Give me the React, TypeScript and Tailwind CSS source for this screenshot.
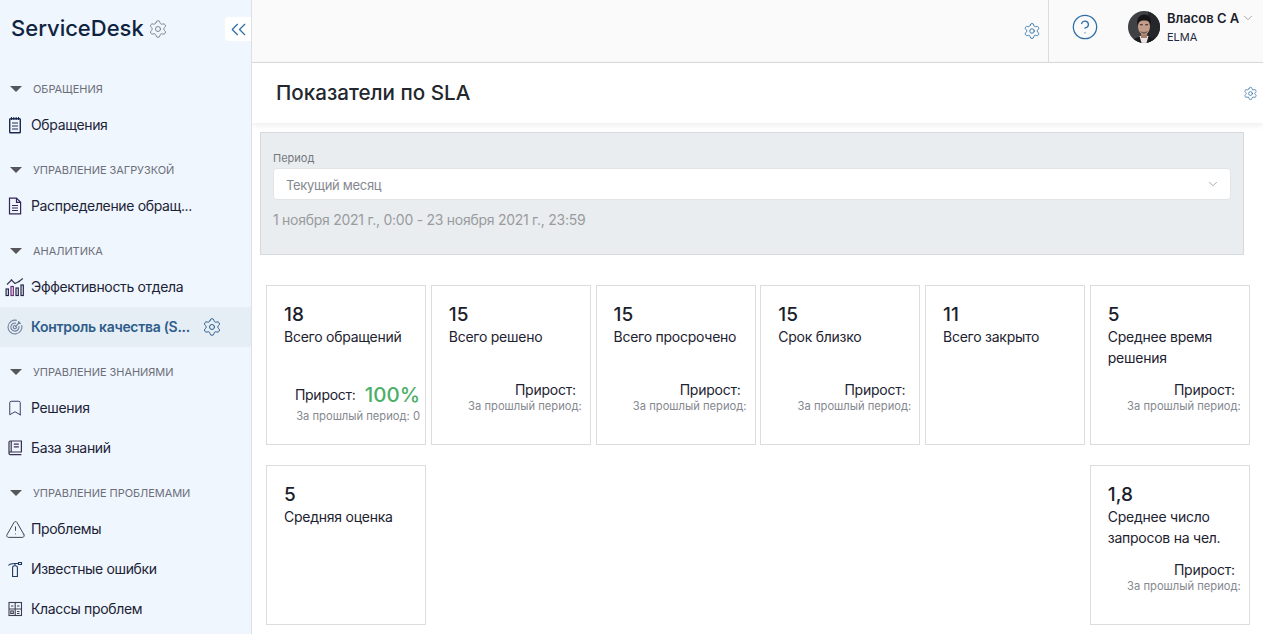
import { Bookmark, ChevronDown, ChevronsLeft, CircleHelp, Settings, TriangleAlert } from "lucide-react";
import type { ReactNode } from "react";

function ClipboardIcon() {
  return (
    <svg width="14" height="18" viewBox="0 0 14 18" fill="none" stroke="#1c2a50" strokeWidth="1.4">
      <rect x="1.700" y="2.700" width="10.600" height="14" rx="0.800" />
      <path d="M3.500 1V4M5.800 1V4M8.200 1V4M10.500 1V4" strokeWidth="1" />
      <path d="M4 7H10M4 10H10M4 13H10" strokeWidth="1.200" />
    </svg>
  );
}

function FileIcon() {
  return (
    <svg width="14" height="18" viewBox="0 0 14 18" fill="none" stroke="#33245c" strokeWidth="1.200">
      <path d="M1.500 1.200H8.500L12.600 5.300V16.800H1.500Z" />
      <path d="M8.500 1.200V5.300H12.600" />
      <path d="M4 8.500H10M4 11H10M4 13.500H10" />
    </svg>
  );
}

function ChartIcon() {
  return (
    <svg width="20" height="20" viewBox="0 0 20 20" fill="none" stroke="#26264a" strokeWidth="1.200">
      <path d="M2 7.500L6.500 3L10 6.500L14 4.500L17.800 1.500" stroke="#3c3558" />
      <circle cx="6.500" cy="3" r="0.800" fill="#26264a" stroke="none" />
      <circle cx="14" cy="4.500" r="0.800" fill="#26264a" stroke="none" />
      <rect x="1.100" y="12" width="2.300" height="6.500" />
      <rect x="6" y="9.500" width="2.300" height="9" stroke="#6b2a7a" />
      <rect x="11" y="11" width="2.300" height="7.500" />
      <rect x="16" y="8" width="2.300" height="10.500" />
    </svg>
  );
}

function TargetIcon() {
  return (
    <svg width="16" height="16" viewBox="0 0 16 16" fill="none" stroke="#6d7f9c" strokeWidth="1.100">
      <path d="M14.600 6.200A6.900 6.900 0 1 1 9.800 1.400" />
      <path d="M11.900 7A4.100 4.100 0 1 1 9 4.100" />
      <path d="M9.600 7.600A1.700 1.700 0 1 1 8.400 6.400" />
      <path d="M8 8L13 3M11.500 2.200V4.500H13.800" />
    </svg>
  );
}

function BookIcon() {
  return (
    <svg width="16" height="16" viewBox="0 0 16 16" fill="none" stroke="#3a3050" strokeWidth="1.200">
      <path d="M2 13V2.200C2 1.500 2.500 1 3.200 1H14.400V12H3.200C2.500 12 2 12.500 2 13.200C2 14 2.500 14.600 3.200 14.600H14.400" />
      <path d="M4.200 1V12" />
      <path d="M6.800 4.200H11.800M6.800 6.800H11.800" />
    </svg>
  );
}

function PinIcon() {
  return (
    <svg width="16" height="16" viewBox="0 0 16 16" fill="none" stroke="#1f3a60" strokeWidth="1.100">
      <path d="M5.600 15.500V6.400C5.600 5.500 6.500 4.800 8 4.800C9.500 4.800 10.400 5.500 10.400 6.400V15.500Z" />
      <path d="M8 4.800V2.500" />
      <path d="M1.500 4.500C2.500 3 4 2.500 8 2.500H11.500" />
      <path d="M11.500 1.500H14.500V3.500H11.500Z" />
    </svg>
  );
}

function TableIcon() {
  return (
    <svg width="16" height="16" viewBox="0 0 16 16" fill="none" stroke="#3f3f50" strokeWidth="1.100">
      <rect x="2" y="1.500" width="12.500" height="13" />
      <path d="M2 8H14.500M8.200 1.500V14.500M4 5H6.500M10 5H12.500M10 10.500H12.500M10 12.500H12.500" />
      <rect x="3.800" y="10" width="2.500" height="2.500" />
    </svg>
  );
}

function Avatar() {
  return (
    <svg width="32" height="32" viewBox="0 0 32 32" className="rounded-full shrink-0">
      <rect width="32" height="32" fill="#3f4145" />
      <rect x="20" width="12" height="32" fill="#26272a" />
      <path d="M3 32C5 27 10 25.500 16 25.500C22 25.500 27 27 29 32Z" fill="#1a1b1e" />
      <path d="M11.500 25H20.500L18.500 32H13.500Z" fill="#ece4e4" />
      <rect x="13" y="21" width="6" height="6" fill="#a87f6e" />
      <ellipse cx="16" cy="15.500" rx="6" ry="8" fill="#c39c8a" />
      <path d="M9.500 15C8 7 12 3.500 16.500 3.500C21 3.500 24 7 22.500 15C22 11 21 9.500 16 9.500C12 9.500 10.500 11 9.500 15Z" fill="#151518" />
      <path d="M12 13.800H14.700M17.300 13.800H20" stroke="#2c211d" strokeWidth="1.100" />
      <path d="M12 20C13.500 23.500 18.500 23.500 20 20C18 21.200 14 21.200 12 20Z" fill="#7a5c4e" />
    </svg>
  );
}

function Section({ title, children }: { title: string; children: ReactNode }) {
  return (
    <div className="mb-[9px]">
      <div className="flex items-center h-8 pl-[10px]">
        <span className="w-0 h-0 border-x-[6px] border-x-transparent border-t-[6px] border-t-[#55555a]" />
        <span className="ml-[11px] text-[11px] text-[#6c6f78] tracking-[-0.05px] uppercase">{title}</span>
      </div>
      {children}
    </div>
  );
}

function NavItem({ icon, label, active }: { icon: ReactNode; label: string; active?: boolean }) {
  return (
    <div className={`flex items-center h-10 ${active ? "bg-[#e5eef5]" : ""}`}>
      <span className="w-[31px] flex justify-center pr-px shrink-0">{icon}</span>
      {active ? (
        <>
          <span className="text-sm font-semibold text-[#2f5d8a] whitespace-nowrap tracking-[-0.3px]">{label}</span>
          <Settings size={20} strokeWidth={1.200} className="ml-[12px] text-[#2f5d8a]" />
        </>
      ) : (
        <span className="text-sm text-[#1c2336] whitespace-nowrap tracking-[-0.35px]">{label}</span>
      )}
    </div>
  );
}

function Growth({ value, prev }: { value?: string; prev?: string }) {
  if (value) {
    return (
      <div className="flex flex-col items-end pr-[5px] -mt-[1px]">
        <div className="flex items-center h-[30px]">
          <span className="text-sm text-[#1d2230] mr-[9px] tracking-[-0.25px]">Прирост:</span>
          <span className="text-[20.500px] font-medium text-[#4caf68]">{value}</span>
        </div>
        <span className="text-[11.200px] leading-[14px] -mt-[1px] text-[#85888f] whitespace-nowrap">За прошлый период: {prev}</span>
      </div>
    );
  }
  return (
    <div className="flex flex-col items-end pr-[8px] mt-[2px]">
      <span className="text-sm leading-[18px] text-[#1d2230] pr-[6px] tracking-[-0.25px]">Прирост:</span>
      <span className="text-[11.200px] leading-[14px] text-[#85888f] whitespace-nowrap">За прошлый период:</span>
    </div>
  );
}

function Card({ num, label, growth, className }: { num: string; label: ReactNode; growth?: ReactNode; className?: string }) {
  return (
    <div className={`h-40 border border-[#dcdcdc] bg-white pt-[16px] ${className ?? ""}`}>
      <div className="pl-[17px] text-[19px] leading-[26px] font-medium text-[#1b1f2b]">{num}</div>
      <div className="pl-[17px] pr-2 text-sm leading-[21px] text-[#1d2230] h-[42px] -mt-[2px] tracking-[-0.25px]">{label}</div>
      <div className="mt-[13px]">{growth}</div>
    </div>
  );
}

export default function App() {
  return (
    <div className="flex h-[634px] w-[1263px] overflow-hidden bg-white font-['Inter',sans-serif]">
      <aside className="w-[252px] shrink-0 bg-[#f0f6fe] border-r border-[#dcdfe3] relative">
        <div className="flex items-center h-[57px] pl-[11px]">
          <span className="text-[22px] font-medium text-[#0f2440]">ServiceDesk</span>
          <Settings size={20} strokeWidth={1.200} className="ml-[4px] text-[#7d8793]" />
        </div>
        <button className="absolute right-0 top-[17px] w-[26px] h-6 bg-white rounded-l flex items-center justify-center text-[#2f6ea5]">
          <ChevronsLeft size={25} strokeWidth={1.200} />
        </button>
        <div className="pt-[16px]">
          <Section title="Обращения">
            <NavItem icon={<ClipboardIcon />} label="Обращения" />
          </Section>
          <Section title="Управление загрузкой">
            <NavItem icon={<FileIcon />} label="Распределение обращ..." />
          </Section>
          <Section title="Аналитика">
            <NavItem icon={<ChartIcon />} label="Эффективность отдела" />
            <NavItem active icon={<TargetIcon />} label="Контроль качества (S..." />
          </Section>
          <Section title="Управление знаниями">
            <NavItem icon={<Bookmark size={18} strokeWidth={1.200} className="text-[#2a2a55]" />} label="Решения" />
            <NavItem icon={<BookIcon />} label="База знаний" />
          </Section>
          <Section title="Управление проблемами">
            <NavItem icon={<TriangleAlert size={21} strokeWidth={1} className="text-[#2a2a35]" />} label="Проблемы" />
            <NavItem icon={<PinIcon />} label="Известные ошибки" />
            <NavItem icon={<TableIcon />} label="Классы проблем" />
          </Section>
        </div>
      </aside>

      <main className="flex-1 min-w-0 flex flex-col">
        <header className="h-[63px] shrink-0 bg-[#fafafa] border-b border-[#dcdcdc] flex items-stretch justify-end">
          <div className="flex items-center pr-[7px]">
            <Settings size={18} strokeWidth={1.200} className="text-[#2f6ea5]" />
          </div>
          <div className="w-[215px] border-l border-[#dcdcdc] flex items-center pl-[22px]">
            <CircleHelp size={28} strokeWidth={1.100} className="text-[#2f6ea5] -mt-[8px]" />
            <div className="ml-[29px] -mt-[8px]"><Avatar /></div>
            <div className="ml-[7px] -mt-[7px]">
              <div className="flex items-center">
                <span className="text-[13px] leading-[18px] font-semibold text-[#1b1f2b] whitespace-nowrap">Власов С А</span>
                <ChevronDown size={14} strokeWidth={1.200} className="ml-[2px] text-[#808790]" />
              </div>
              <div className="text-[11px] leading-[18px] text-[#1b2a40] mt-px">ELMA</div>
            </div>
          </div>
        </header>

        <div className="h-[60px] shrink-0 bg-white shadow-[0_2px_6px_rgba(0,0,0,0.08)] flex items-center justify-between pl-[24px] pr-[5px]">
          <h1 className="text-[20.600px] font-medium text-[#23272e]">Показатели по SLA</h1>
          <Settings size={15} strokeWidth={1.200} className="text-[#2f6ea5]" />
        </div>

        <section className="ml-2 mr-[19px] mt-[9px] h-[123px] bg-[#e9edf0] border border-[#d6dade] px-[12px] pt-[17px]">
          <div className="text-[11px] leading-[16px] text-[#74787e]">Период</div>
          <div className="h-8 mt-[2px] bg-white rounded border border-[#e2e5e8] flex items-center justify-between pl-[12px] pr-[10px]">
            <span className="text-[13px] text-[#85888f] pt-[4px] tracking-[-0.3px]">Текущий месяц</span>
            <ChevronDown size={14} strokeWidth={1.200} className="text-[#808790]" />
          </div>
          <div className="mt-[10px] text-sm text-[#9a9b9d] tracking-[-0.27px]">1 ноября 2021 г., 0:00 - 23 ноября 2021 г., 23:59</div>
        </section>

        <section className="grid grid-cols-[repeat(6,160px)] gap-x-[4.75px] gap-y-5 ml-[14px] mt-[30px]">
          <Card num="18" label="Всего обращений" growth={<Growth value="100%" prev="0" />} />
          <Card num="15" label="Всего решено" growth={<Growth />} />
          <Card num="15" label="Всего просрочено" growth={<Growth />} />
          <Card num="15" label="Срок близко" growth={<Growth />} />
          <Card num="11" label="Всего закрыто" />
          <Card num="5" label="Среднее время решения" growth={<Growth />} />
          <Card num="5" label="Средняя оценка" />
          <Card num="1,8" label="Среднее число запросов на чел." growth={<Growth />} className="col-start-6" />
        </section>
      </main>
    </div>
  );
}
